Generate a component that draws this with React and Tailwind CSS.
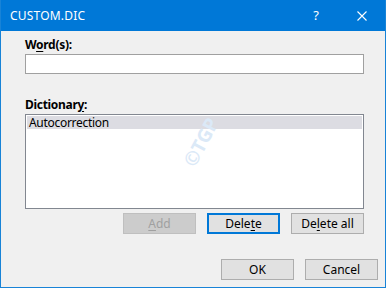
import React from "react";

const font = { fontFamily: '"Noto Sans", "Segoe UI", Arial, sans-serif' };

const Btn = ({ children, className = "" }) => (
  <button
    className={`w-[73px] h-[21px] flex items-center justify-center text-[12px] leading-none text-black bg-[#e1e1e1] border border-[#adadad] ${className}`}
  >
    {children}
  </button>
);

export default function App() {
  return (
    <div
      className="w-[386px] h-[288px] bg-[#f0f0f0] border-x border-b border-[#1883d7] flex flex-col relative overflow-hidden"
      style={font}
    >
      {/* title bar */}
      <div className="h-[31px] bg-[#0078d7] -mx-px flex items-center text-white">
        <span className="ml-[10px] text-[12px] tracking-[0.2px]">CUSTOM.DIC</span>
        <span className="ml-auto mr-[38px] text-[13px]">?</span>
        <svg width="10" height="10" viewBox="0 0 10 10" className="mr-[19px]">
          <path d="M0.5 0.5 L9.5 9.5 M9.5 0.5 L0.5 9.5" stroke="white" strokeWidth="1.1" />
        </svg>
      </div>

      <div className="pl-[24px] pr-[21px] flex flex-col text-[12px] text-black tracking-[-0.3px]">
        <div className="mt-[5px] h-[17px] font-bold leading-[17px]">
          W<span className="underline underline-offset-2">o</span>rd(s):
        </div>
        <div className="mt-[1px] w-[339px] h-[20px] bg-white border border-[#a0a0a0]" />

        <div className="mt-[22px] h-[17px] font-bold leading-[17px]">
          Dictionar<span className="underline underline-offset-2">y</span>:
        </div>
        <div className="mt-[1px] w-[339px] h-[95px] bg-white border border-[#828790] p-px">
          <div className="h-[13px] bg-[#dcdce2] leading-[13px] pl-[2px]">Autocorrection</div>
        </div>

        <div className="mt-[4px] flex justify-end gap-[11px] w-[339px] tracking-normal">
          <Btn className="!bg-[#cccccc] !border-[#bfbfbf] !text-[#a0a0a0]">
            <span className="underline underline-offset-2">A</span>dd
          </Btn>
          <Btn className="!border-2 !border-[#0078d7]">
            Dele<span className="underline underline-offset-2">t</span>e
          </Btn>
          <Btn>
            De<span className="underline underline-offset-2">l</span>ete all
          </Btn>
        </div>
      </div>

      <div className="mt-[25px] flex justify-end gap-[11px] pr-[7px]">
        <Btn>OK</Btn>
        <Btn>Cancel</Btn>
      </div>

      {/* watermark */}
      <div className="absolute left-[174px] top-[128px] -rotate-[62deg] text-[19px] font-bold text-[#dbe9f7] select-none">
        ©TGP
      </div>
    </div>
  );
}
